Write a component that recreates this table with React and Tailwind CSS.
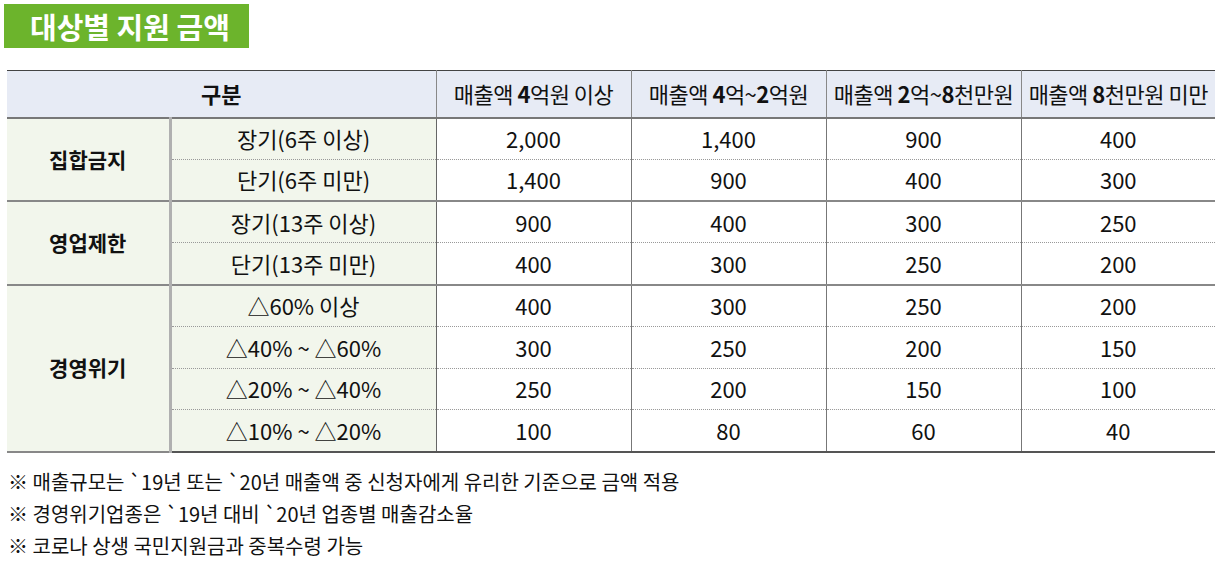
import React from 'react';

const font = { fontFamily: '"Noto Sans CJK KR", "Noto Sans", sans-serif' };

const headers = [
  ['매출액 ', '4', '억원 이상'],
  ['매출액 ', '4', '억~', '2', '억원'],
  ['매출액 ', '2', '억~', '8', '천만원'],
  ['매출액 ', '8', '천만원 미만'],
];

const groups = [
  {
    name: '집합금지',
    rows: [
      ['장기(6주 이상)', '2,000', '1,400', '900', '400'],
      ['단기(6주 미만)', '1,400', '900', '400', '300'],
    ],
  },
  {
    name: '영업제한',
    rows: [
      ['장기(13주 이상)', '900', '400', '300', '250'],
      ['단기(13주 미만)', '400', '300', '250', '200'],
    ],
  },
  {
    name: '경영위기',
    rows: [
      ['△60% 이상', '400', '300', '250', '200'],
      ['△40% ~ △60%', '300', '250', '200', '150'],
      ['△20% ~ △40%', '250', '200', '150', '100'],
      ['△10% ~ △20%', '100', '80', '60', '40'],
    ],
  },
];

const notes = [
  '※ 매출규모는 `19년 또는 `20년 매출액 중 신청자에게 유리한 기준으로 금액 적용',
  '※ 경영위기업종은 `19년 대비 `20년 업종별 매출감소율',
  '※ 코로나 상생 국민지원금과 중복수령 가능',
];

export default function App() {
  return (
    <div className="w-[1225px] h-[562px] bg-white text-[#111] pt-[4px] pl-[4px]" style={font}>
      {/* Title */}
      <div className="w-[245px] h-[44px] bg-[#6cb42c] flex items-center pl-[26px]">
        <span className="text-white text-[29px] font-bold leading-none">대상별 지원 금액</span>
      </div>

      {/* Table */}
      <table className="mt-[22px] ml-[3px] w-[1208px] border-collapse table-fixed text-[22px]">
        <colgroup>
          <col className="w-[163px]" />
          <col className="w-[266px]" />
          <col className="w-[195px]" />
          <col className="w-[195px]" />
          <col className="w-[195px]" />
          <col className="w-[194px]" />
        </colgroup>
        <thead>
          <tr className="h-[47px] bg-[#e7ebf5] border-t border-t-[#444] border-b-2 border-b-[#777]">
            <th colSpan={2} className="font-bold text-center border-r border-r-[#888]">구분</th>
            {headers.map((h, i) => (
              <th key={i} className={`font-normal text-center tracking-[-0.5px] ${i < 3 ? 'border-r border-r-[#888]' : ''}`}>
                {h.map((part, j) =>
                  /\d/.test(part) ? (
                    <span key={j} className="font-bold">{part}</span>
                  ) : (
                    <span key={j}>{part}</span>
                  )
                )}
              </th>
            ))}
          </tr>
        </thead>
        <tbody>
          {groups.map((g, gi) =>
            g.rows.map((r, ri) => {
              const last = ri === g.rows.length - 1;
              const rowBorder = last
                ? gi === groups.length - 1
                  ? 'border-b-2 border-b-[#555]'
                  : 'border-b-2 border-b-[#888]'
                : 'border-b border-dotted border-b-[#999]';
              return (
                <tr key={`${gi}-${ri}`} className={`h-[41.75px] ${rowBorder}`}>
                  {ri === 0 && (
                    <td rowSpan={g.rows.length} className="bg-[#f2f6ec] text-[21px] font-bold text-center border-r-[3px] border-r-[#b0b0b0] border-b-2 border-b-[#888] border-solid">
                      {g.name}
                    </td>
                  )}
                  <td className="bg-[#f2f6ec] text-center border-r border-r-[#666] border-solid">{r[0]}</td>
                  {r.slice(1).map((v, vi) => (
                    <td key={vi} className={`text-center ${vi < 3 ? 'border-r border-r-[#777] border-solid' : ''}`}>
                      {v}
                    </td>
                  ))}
                </tr>
              );
            })
          )}
        </tbody>
      </table>

      {/* Notes */}
      <div className="mt-[13px] ml-[4px] text-[20px] leading-[32px]">
        {notes.map((n) => (
          <div key={n}>{n}</div>
        ))}
      </div>
    </div>
  );
}
